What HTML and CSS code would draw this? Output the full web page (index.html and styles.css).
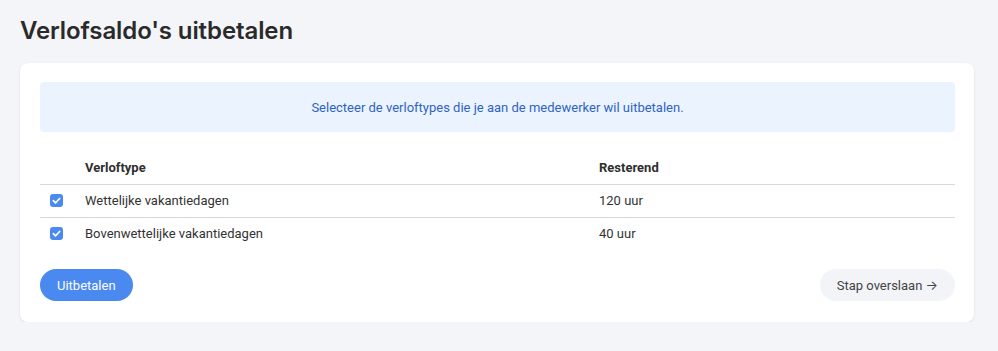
FILE: index.html
```html
<!DOCTYPE html>
<html lang="nl">
<head>
  <meta charset="UTF-8" />
  <title>Verlofsaldo's uitbetalen</title>
  <link rel="stylesheet" href="styles.css">
</head>
<body>

  <h1>Verlofsaldo's uitbetalen</h1>

  <div class="card">

    <!-- Info -->
    <div class="info">Selecteer de verloftypes die je aan de medewerker wil uitbetalen.</div>

    <!-- Verloftypes -->
    <table class="leave-table">
      <colgroup>
        <col class="col-check">
        <col class="col-type">
        <col>
      </colgroup>
      <thead>
        <tr>
          <th></th>
          <th>Verloftype</th>
          <th>Resterend</th>
        </tr>
      </thead>
      <tbody>
        <tr>
          <td><span class="check"><svg viewBox="0 0 14 14" width="13" height="13"><path d="M3.6 7.2l2.3 2.3 4.5-4.7" fill="none" stroke="#fff" stroke-width="1.8" stroke-linecap="round" stroke-linejoin="round"/></svg></span></td>
          <td>Wettelijke vakantiedagen</td>
          <td>120 uur</td>
        </tr>
        <tr>
          <td><span class="check"><svg viewBox="0 0 14 14" width="13" height="13"><path d="M3.6 7.2l2.3 2.3 4.5-4.7" fill="none" stroke="#fff" stroke-width="1.8" stroke-linecap="round" stroke-linejoin="round"/></svg></span></td>
          <td>Bovenwettelijke vakantiedagen</td>
          <td>40 uur</td>
        </tr>
      </tbody>
    </table>

    <div class="actions">
      <button class="btn btn-primary">Uitbetalen</button>
      <button class="btn btn-light">Stap overslaan <span class="arrow">&rarr;</span></button>
    </div>

  </div>

</body>
</html>
```

FILE: styles.css
```css
* { box-sizing: border-box; font-family: 'Roboto', 'Noto Sans', sans-serif; }
body {
  margin: 0;
  padding: 15px 24px 0 20px;
  background: #f4f5f9;
  color: #2b2b2b;
}

h1 {
  margin: 0 0 16px;
  font-family: 'Inter', sans-serif;
  font-size: 24px;
  line-height: 32px;
  font-weight: 600;
  color: #2a2a2a;
  letter-spacing: -0.1px;
}

.card {
  background: white;
  border-radius: 8px;
  padding: 19px 19px 21px 20px;
  box-shadow: 0 1px 3px rgba(0,0,0,0.09);
}

/* Info */
.info {
  background: #ebf4fe;
  color: #2f62c4;
  border-radius: 4px;
  height: 50px;
  font-size: 13px;
  display: flex;
  align-items: center;
  justify-content: center;
}

/* Table */
.leave-table {
  width: 100%;
  margin-top: 20px;
  border-collapse: collapse;
  font-size: 13px;
}
.col-check { width: 45px; }
.col-type { width: 514px; }
.leave-table th {
  text-align: left;
  font-weight: 700;
  color: #2f2f2f;
  height: 32px;
  padding: 0;
  border-bottom: 1px solid #d8d8da;
}
.leave-table td {
  height: 33px;
  padding: 0;
  color: #333;
}
.leave-table tbody tr:first-child td { border-bottom: 1px solid #d8d8da; }
.check {
  display: flex;
  align-items: center;
  justify-content: center;
  width: 13px;
  height: 13px;
  margin-left: 10px;
  border-radius: 3px;
  background: #4a8af0;
}

/* Buttons */
.actions {
  display: flex;
  justify-content: space-between;
  margin-top: 19px;
}
.btn {
  border: none;
  height: 32px;
  border-radius: 16px;
  font-size: 13px;
  cursor: pointer;
}
.btn-primary {
  background: #4a89ef;
  color: white;
  padding: 0 17px;
}
.btn-light {
  background: #f3f4f8;
  color: #444;
  padding: 0 17px 0 17px;
}
.arrow {
  font-family: 'Inter', sans-serif;
  font-size: 13px;
}
```
